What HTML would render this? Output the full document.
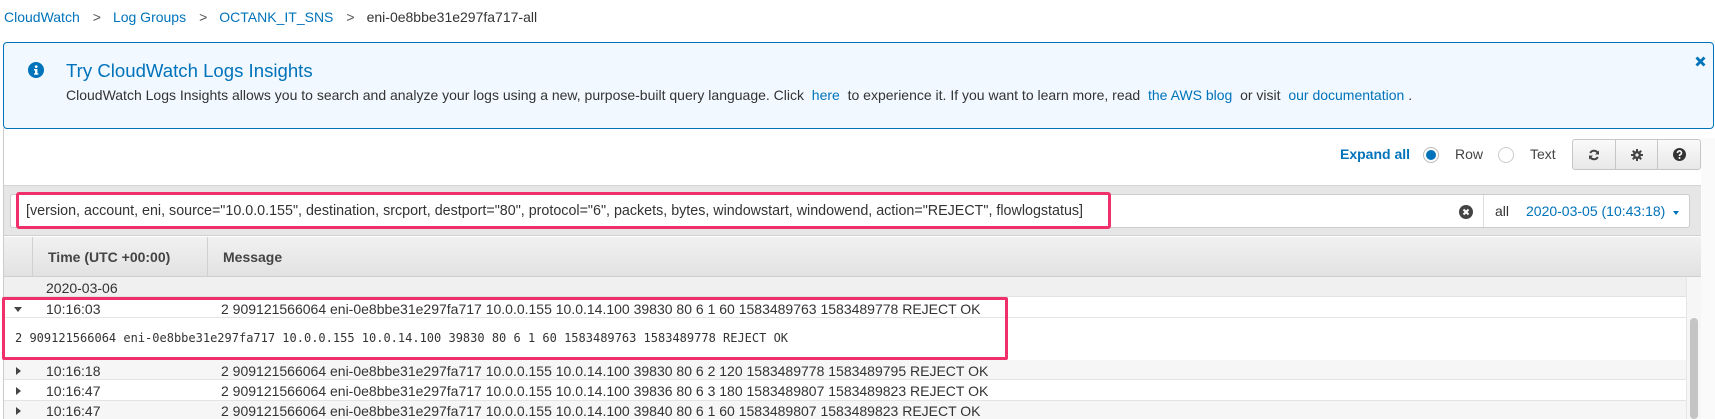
<!DOCTYPE html>
<html><head><meta charset="utf-8"><style>
*{box-sizing:border-box;margin:0;padding:0}
body{width:1715px;height:419px;overflow:hidden;background:#fff;font-family:"Liberation Sans",Arial,sans-serif;color:#333;position:relative}
.a{position:absolute;white-space:nowrap}
.blue{color:#0073bb}
</style></head><body>
<!-- breadcrumb -->
<div class="a" style="left:4px;top:8px;font-size:14px;line-height:18px">
<span class="blue">CloudWatch</span><span style="margin:0 12px 0 13px;color:#555">&gt;</span><span class="blue">Log Groups</span><span style="margin:0 12px 0 13px;color:#555">&gt;</span><span class="blue">OCTANK_IT_SNS</span><span style="margin:0 12px 0 13px;color:#555">&gt;</span><span style="color:#333">eni-0e8bbe31e297fa717-all</span>
</div>
<!-- left border -->
<div class="a" style="left:3px;top:128px;width:1px;height:291px;background:#ccc"></div>
<!-- info box -->
<div class="a" style="left:3px;top:42px;width:1711px;height:87px;background:#f1f8ff;border:1px solid #0073bb;border-radius:4px"></div>
<svg class="a" style="left:28px;top:62px" width="16" height="16" viewBox="0 0 16 16"><circle cx="8" cy="8" r="8" fill="#0073bb"/><rect x="7" y="7" width="2.4" height="5.5" fill="#fff"/><rect x="6" y="7" width="3" height="1.4" fill="#fff"/><rect x="6" y="11.3" width="4.4" height="1.4" fill="#fff"/><circle cx="8.2" cy="4.6" r="1.4" fill="#fff"/></svg>
<div class="a blue" style="left:66px;top:60px;font-size:18.6px;line-height:22px">Try CloudWatch Logs Insights</div>
<div class="a" style="left:66px;top:87px;font-size:14px;line-height:16px;color:#333">CloudWatch Logs Insights allows you to search and analyze your logs using a new, purpose-built query language. Click <span class="blue">&nbsp;here&nbsp;</span> to experience it. If you want to learn more, read <span class="blue">&nbsp;the AWS blog&nbsp;</span> or visit <span class="blue">&nbsp;our documentation&nbsp;</span>.</div>
<svg class="a" style="left:1695px;top:56px" width="11" height="11" viewBox="0 0 11 11"><path d="M1.5 1.5L9.5 9.5M9.5 1.5L1.5 9.5" stroke="#0073bb" stroke-width="2.8"/></svg>
<!-- toolbar -->
<div class="a" style="left:1340px;top:146px;font-size:14px;font-weight:bold;color:#0073bb">Expand all</div>
<div class="a" style="left:1423px;top:147px;width:16px;height:16px;border-radius:50%;border:1px solid #bbb;background:#fff"></div>
<div class="a" style="left:1427px;top:151px;width:8px;height:8px;border-radius:50%;background:#0073bb;box-shadow:0 0 0 1px #0073bb"></div>
<div class="a" style="left:1455px;top:146px;font-size:14px;color:#444">Row</div>
<div class="a" style="left:1498px;top:147px;width:16px;height:16px;border-radius:50%;border:1px solid #ccc;background:#fff"></div>
<div class="a" style="left:1530px;top:146px;font-size:14px;color:#444">Text</div>
<div class="a" style="left:1572px;top:139px;width:129px;height:31px;border:1px solid #c6c6c6;border-radius:3px;background:linear-gradient(#fafafa,#e8e8e8);display:flex">
<div style="flex:1;border-right:1px solid #c6c6c6;display:flex;align-items:center;justify-content:center"><svg width="12" height="12" viewBox="0 0 12 12"><path d="M10 4.5A4.3 4.3 0 0 0 2.2 4M2 7.5A4.3 4.3 0 0 0 9.8 8" fill="none" stroke="#444" stroke-width="2"/><path d="M11 1.5V5.5H7z M1 10.5V6.5H5z" fill="#444"/></svg></div>
<div style="flex:1;border-right:1px solid #c6c6c6;display:flex;align-items:center;justify-content:center"><svg width="12" height="12" viewBox="0 0 12 12"><g fill="#444"><circle cx="6" cy="6" r="4"/><rect x="5" y="0" width="2" height="12"/><rect x="0" y="5" width="12" height="2"/><rect x="5" y="0" width="2" height="12" transform="rotate(45 6 6)"/><rect x="5" y="0" width="2" height="12" transform="rotate(-45 6 6)"/></g><circle cx="6" cy="6" r="1.6" fill="#eee"/></svg></div>
<div style="flex:1;display:flex;align-items:center;justify-content:center"><svg width="13" height="13" viewBox="0 0 13 13"><circle cx="6.5" cy="6.5" r="6.5" fill="#333"/><path d="M4.5 5A2 2 0 1 1 7 6.8C6.5 7 6.5 7.4 6.5 8" fill="none" stroke="#fff" stroke-width="1.6"/><circle cx="6.5" cy="10" r="1" fill="#fff"/></svg></div>
</div>
<!-- right strip -->
<div class="a" style="left:1701px;top:138px;width:14px;height:281px;background:#fafafa"></div>
<!-- grey panel -->
<div class="a" style="left:4px;top:185px;width:1697px;height:51px;background:#e6e6e6;border-top:1px solid #d5d5d5;border-bottom:1px solid #d0d0d0"></div>
<div class="a" style="left:10px;top:194px;width:1680px;height:34px;background:#fff;border:1px solid #ccc;border-radius:3px"></div>
<div class="a" style="left:1483px;top:195px;width:1px;height:32px;background:#ddd"></div>
<div class="a" style="left:26px;top:203px;font-size:14.3px;color:#333">[version, account, eni, source="10.0.0.155", destination, srcport, destport="80", protocol="6", packets, bytes, windowstart, windowend, action="REJECT", flowlogstatus]</div>
<svg class="a" style="left:1459px;top:205px" width="14" height="14" viewBox="0 0 14 14"><circle cx="7" cy="7" r="7" fill="#444"/><path d="M4.5 4.5L9.5 9.5M9.5 4.5L4.5 9.5" stroke="#fff" stroke-width="2"/></svg>
<div class="a" style="left:1495px;top:203px;font-size:14px;color:#333">all</div>
<div class="a blue" style="left:1526px;top:203px;font-size:14px">2020-03-05 (10:43:18)</div>
<div class="a" style="left:1673px;top:211px;border-left:3.5px solid transparent;border-right:3.5px solid transparent;border-top:4px solid #0073bb"></div>
<div class="a" style="left:16px;top:192px;width:1095px;height:37px;border:3px solid #f0306a;border-radius:3px"></div>
<!-- header -->
<div class="a" style="left:4px;top:237px;width:1697px;height:40px;background:linear-gradient(#f1f1f1,#e2e2e2);border-bottom:1px solid #cfcfcf"></div>
<div class="a" style="left:32px;top:237px;width:1px;height:39px;background:#d0d0d0"></div>
<div class="a" style="left:207px;top:237px;width:1px;height:39px;background:#d0d0d0"></div>
<div class="a" style="left:48px;top:249px;font-size:14px;font-weight:bold;color:#444">Time (UTC +00:00)</div>
<div class="a" style="left:223px;top:249px;font-size:14px;font-weight:bold;color:#444">Message</div>
<!-- date row -->
<div class="a" style="left:4px;top:277px;width:1697px;height:20px;background:#f0f0f0;border-bottom:1px solid #e2e2e2"></div>
<div class="a" style="left:46px;top:280px;font-size:14px;color:#333">2020-03-06</div>
<!-- rows -->
<div class="a" style="left:4px;top:298px;width:1682px;height:121px;background:#fff"></div>
<div class="a" style="left:4px;top:317px;width:1682px;height:1px;background:#e4e4e4"></div>
<div class="a" style="left:4px;top:360px;width:1682px;height:20px;background:#f6f6f6;border-bottom:1px solid #e4e4e4"></div>
<div class="a" style="left:4px;top:400px;width:1682px;height:19px;background:#f6f6f6;border-top:1px solid #e4e4e4"></div>
<div class="a" style="left:1686px;top:277px;width:15px;height:142px;background:#f6f6f6;border-left:1px solid #e6e6e6"></div>
<div class="a" style="left:1690px;top:318px;width:8px;height:101px;background:#c4c4c4;border-radius:4px"></div>

<div class="a" style="left:14px;top:307px;border-left:4px solid transparent;border-right:4px solid transparent;border-top:5px solid #444"></div>
<div class="a" style="left:46px;top:301px;font-size:14px">10:16:03</div>
<div class="a" style="left:221px;top:301px;font-size:14px">2 909121566064 eni-0e8bbe31e297fa717 10.0.0.155 10.0.14.100 39830 80 6 1 60 1583489763 1583489778 REJECT OK</div>
<div class="a" style="left:15px;top:331px;font-size:12px;font-family:'DejaVu Sans Mono','Liberation Mono',monospace;color:#333">2 909121566064 eni-0e8bbe31e297fa717 10.0.0.155 10.0.14.100 39830 80 6 1 60 1583489763 1583489778 REJECT OK</div>
<div class="a" style="left:2px;top:297px;width:1006px;height:63px;border:3px solid #f0306a;border-radius:2px"></div>

<div class="a" style="left:16px;top:367px;border-top:4px solid transparent;border-bottom:4px solid transparent;border-left:5px solid #444"></div>
<div class="a" style="left:46px;top:363px;font-size:14px">10:16:18</div>
<div class="a" style="left:221px;top:363px;font-size:14px">2 909121566064 eni-0e8bbe31e297fa717 10.0.0.155 10.0.14.100 39830 80 6 2 120 1583489778 1583489795 REJECT OK</div>
<div class="a" style="left:16px;top:387px;border-top:4px solid transparent;border-bottom:4px solid transparent;border-left:5px solid #444"></div>
<div class="a" style="left:46px;top:383px;font-size:14px">10:16:47</div>
<div class="a" style="left:221px;top:383px;font-size:14px">2 909121566064 eni-0e8bbe31e297fa717 10.0.0.155 10.0.14.100 39836 80 6 3 180 1583489807 1583489823 REJECT OK</div>
<div class="a" style="left:16px;top:407px;border-top:4px solid transparent;border-bottom:4px solid transparent;border-left:5px solid #444"></div>
<div class="a" style="left:46px;top:403px;font-size:14px">10:16:47</div>
<div class="a" style="left:221px;top:403px;font-size:14px">2 909121566064 eni-0e8bbe31e297fa717 10.0.0.155 10.0.14.100 39840 80 6 1 60 1583489807 1583489823 REJECT OK</div>
</body></html>
